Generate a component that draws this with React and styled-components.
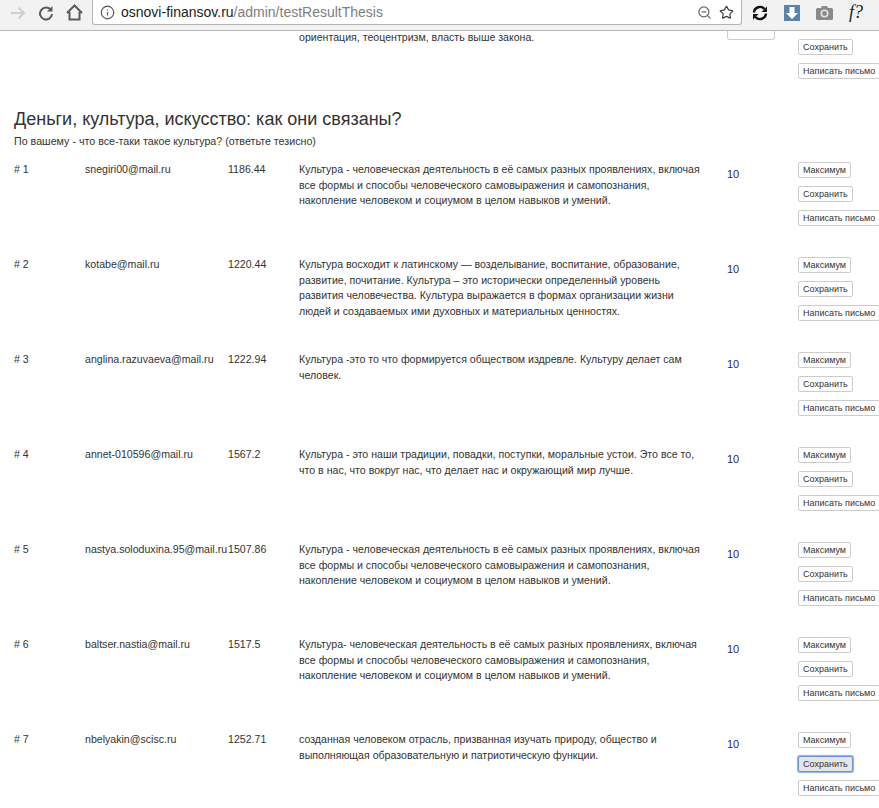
import React from 'react'
import styled, { createGlobalStyle } from 'styled-components'
import { Info, ZoomOut, Star } from 'lucide-react'

const GlobalStyle = createGlobalStyle`
    html, body {
        margin: 0;
        height: 100%;
        overflow: hidden;
        background: #fff;
    }
    #root { height: 100%; }
`

const Window = styled.div`
    display: flex;
    flex-direction: column;
    height: 808px;
    overflow: hidden;
    font-family: 'Liberation Sans', Arial, sans-serif;
    color: #333;
`

const Toolbar = styled.div`
    flex: none;
    display: flex;
    align-items: flex-start;
    height: 30px;
    background: #f2f2f2;
    border-bottom: 1px solid #b8b8b8;
`

const NavIcons = styled.div`
    flex: none;
    display: flex;
    align-items: center;
    width: 92px;
    height: 25px;
    padding-left: 10px;
    gap: 12px;
    box-sizing: border-box;
`

const Omnibox = styled.div`
    flex: none;
    display: flex;
    align-items: center;
    width: 650px;
    height: 25px;
    box-sizing: border-box;
    padding: 0 7px 0 7px;
    background: #fff;
    border: 1px solid #b4b4b4;
    border-top: none;
    border-radius: 0 0 3px 3px;
`

const Url = styled.span`
    flex: 1;
    margin-left: 6px;
    font-size: 14px;
    color: #808080;
    white-space: nowrap;
`

const Host = styled.span`
    color: #222;
`

const OmniActions = styled.div`
    display: flex;
    align-items: center;
    gap: 7px;
`

const Extensions = styled.div`
    flex: 1;
    display: flex;
    align-items: center;
    height: 25px;
    padding-left: 10px;
    gap: 16px;
`

const FormulaIcon = styled.span`
    font-family: 'Liberation Serif', serif;
    font-style: italic;
    font-size: 18px;
    color: #222;
`

const Viewport = styled.div`
    flex: 1;
    overflow: hidden;
`

const Page = styled.div`
    margin-top: -17px;
    padding: 0 0 0 14px;
    width: 865px;
`

const Row = styled.div`
    display: grid;
    grid-template-columns: 71px 143px 71px 428px 71px 81px;
    height: 95px;
    font-size: 10.6px;
    line-height: 15.7px;
    box-sizing: border-box;
`

const Cell = styled.div`
    white-space: nowrap;
`

const Answer = styled.div`
    padding-right: 20px;
`

const ScoreInput = styled.input`
    display: block;
    width: 48px;
    height: ${props => (props.$framed ? 26 : 24)}px;
    box-sizing: border-box;
    padding: 0;
    font: 11px 'Liberation Sans', Arial, sans-serif;
    color: #2b2b55;
    background: #fff;
    outline: none;
    border: none;
    box-shadow: ${props => (props.$framed ? 'inset 0 0 0 1px #ccc' : 'none')};
    border-radius: 3px;
`

const Actions = styled.div`
    display: flex;
    flex-direction: column;
    align-items: flex-start;
    gap: 8px;
    margin-top: ${props => props.$shift || 0}px;
`

const ActionButton = styled.button`
    flex: none;
    height: 16px;
    padding: 0 4px;
    font: 9px/14px 'Liberation Sans', Arial, sans-serif;
    color: #333;
    white-space: nowrap;
    background: ${props => (props.$focused ? '#e6e6e6' : '#fff')};
    border: 1px solid ${props => (props.$focused ? '#6d8fd6' : '#ccc')};
    box-shadow: ${props => (props.$focused ? '0 0 1px 1px #8fb0ea' : 'none')};
    border-radius: 2px;
`

const Heading = styled.h3`
    margin: 0;
    font-size: 18px;
    font-weight: 400;
    line-height: 20px;
`

const Lead = styled.p`
    margin: 4px 0 13px;
    font-size: 10.7px;
    line-height: 16px;
`

const DownloadBadge = () => (
    <svg width="16" height="16" viewBox="0 0 16 16">
        <rect width="16" height="16" fill="#5b82ad" />
        <path d="M5.5 2h5v6H14l-6 6-6-6h3.5z" fill="#fff" />
    </svg>
)

const SyncIcon = () => (
    <svg width="16" height="16" viewBox="0 0 16 16" fill="none">
        <path d="M2 7.5A6 6 0 0 1 12.5 4M14 8.5A6 6 0 0 1 3.5 12" stroke="#111" strokeWidth="2.4" />
        <path d="M15 1.5V7H9.5zM1 14.5V9h5.5z" fill="#111" />
    </svg>
)

const CameraIcon = () => (
    <svg width="17" height="15" viewBox="0 0 17 15">
        <path d="M1.5 3H5l1-2h5l1 2h3.5A1.5 1.5 0 0 1 17 4.5v9a1.5 1.5 0 0 1-1.5 1.5h-14A1.5 1.5 0 0 1 0 13.5v-9A1.5 1.5 0 0 1 1.5 3z" fill="#8a8a8a" />
        <circle cx="8.5" cy="8.5" r="4" fill="#e4e4e4" />
        <circle cx="8.5" cy="8.5" r="2.4" fill="#8a8a8a" />
    </svg>
)

const BackArrow = () => (
    <svg width="16" height="16" viewBox="0 0 16 16" fill="none" stroke="#d0d0d0" strokeWidth="2">
        <path d="M1 8h13M8.5 2.5 14 8l-5.5 5.5" />
    </svg>
)

const ReloadIcon = () => (
    <svg width="16" height="16" viewBox="0 0 16 16" fill="none">
        <path d="M13 5.2A6 6 0 1 0 14 9" stroke="#5a5a5a" strokeWidth="2" />
        <path d="M14.5 1v5.5H9z" fill="#5a5a5a" />
    </svg>
)

const HomeIcon = () => (
    <svg width="17" height="17" viewBox="0 0 17 17" fill="none" stroke="#5a5a5a" strokeWidth="2">
        <path d="M1 9 8.5 1.5 16 9M3.5 8v7.5h10V8" />
    </svg>
)

const rows = [
    {
        id: 1,
        email: 'snegiri00@mail.ru',
        sum: '1186.44',
        text: 'Культура - человеческая деятельность в её самых разных проявлениях, включая все формы и способы человеческого самовыражения и самопознания, накопление человеком и социумом в целом навыков и умений.',
    },
    {
        id: 2,
        email: 'kotabe@mail.ru',
        sum: '1220.44',
        text: 'Культура восходит к латинскому — возделывание, воспитание, образование, развитие, почитание. Культура – это исторически определенный уровень развития человечества. Культура выражается в формах организации жизни людей и создаваемых ими духовных и материальных ценностях.',
    },
    {
        id: 3,
        email: 'anglina.razuvaeva@mail.ru',
        sum: '1222.94',
        text: 'Культура -это то что формируется обществом издревле. Культуру делает сам человек.',
    },
    {
        id: 4,
        email: 'annet-010596@mail.ru',
        sum: '1567.2',
        text: 'Культура - это наши традиции, повадки, поступки, моральные устои. Это все то, что в нас, что вокруг нас, что делает нас и окружающий мир лучше.',
    },
    {
        id: 5,
        email: 'nastya.soloduxina.95@mail.ru',
        sum: '1507.86',
        text: 'Культура - человеческая деятельность в её самых разных проявлениях, включая все формы и способы человеческого самовыражения и самопознания, накопление человеком и социумом в целом навыков и умений.',
    },
    {
        id: 6,
        email: 'baltser.nastia@mail.ru',
        sum: '1517.5',
        text: 'Культура- человеческая деятельность в её самых разных проявлениях, включая все формы и способы человеческого самовыражения и самопознания, накопление человеком и социумом в целом навыков и умений.',
    },
    {
        id: 7,
        email: 'nbelyakin@scisc.ru',
        sum: '1252.71',
        text: 'созданная человеком отрасль, призванная изучать природу, общество и выполняющая образовательную и патриотическую функции.',
        focused: true,
    },
]

const ButtonGroup = ({ focused, shift }) => (
    <Actions $shift={shift}>
        <ActionButton>Максимум</ActionButton>
        <ActionButton $focused={focused}>Сохранить</ActionButton>
        <ActionButton>Написать письмо</ActionButton>
    </Actions>
)

const App = () => (
    <Window>
        <GlobalStyle />
        <Toolbar>
            <NavIcons>
                <BackArrow />
                <ReloadIcon />
                <HomeIcon />
            </NavIcons>
            <Omnibox>
                <Info size={15} color="#5a5a5a" />
                <Url><Host>osnovi-finansov.ru</Host>/admin/testResultThesis</Url>
                <OmniActions>
                    <ZoomOut size={15} color="#666" />
                    <Star size={15} color="#444" />
                </OmniActions>
            </Omnibox>
            <Extensions>
                <SyncIcon />
                <DownloadBadge />
                <CameraIcon />
                <FormulaIcon>f?</FormulaIcon>
            </Extensions>
        </Toolbar>
        <Viewport>
            <Page>
                <Row>
                    <Cell />
                    <Cell />
                    <Cell />
                    <Answer>&nbsp;<br />ориентация, теоцентризм, власть выше закона.</Answer>
                    <div><ScoreInput $framed readOnly defaultValue="" /></div>
                    <ButtonGroup shift={1} />
                </Row>
                <Heading>Деньги, культура, искусство: как они связаны?</Heading>
                <Lead>По вашему - что все-таки такое культура? (ответьте тезисно)</Lead>
                {rows.map(item => (
                    <Row key={item.id}>
                        <Cell># {item.id}</Cell>
                        <Cell>{item.email}</Cell>
                        <Cell>{item.sum}</Cell>
                        <Answer>{item.text}</Answer>
                        <div><ScoreInput readOnly defaultValue="10" /></div>
                        <ButtonGroup focused={item.focused} />
                    </Row>
                ))}
            </Page>
        </Viewport>
    </Window>
)

export default App
